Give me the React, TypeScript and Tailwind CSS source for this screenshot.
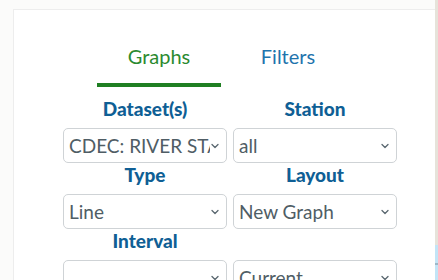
import React from "react";

const Chevron = () => (
  <svg width="8" height="6" viewBox="0 0 8 6" className="shrink-0">
    <path d="M1 1.5 L4 4.5 L7 1.5" fill="none" stroke="#5a6870" strokeWidth="1.3" strokeLinecap="round" strokeLinejoin="round" />
  </svg>
);

const Select = ({ value }: { value: string }) => (
  <div className="relative h-[35px] w-[164px] rounded-[5px] border border-[#cfd3d6] bg-white flex items-center pl-[5px] pr-[7px]">
    <div className="flex-1 overflow-hidden whitespace-nowrap text-[19px] leading-[35px] text-[#4f5d65] mr-[1px]">{value}</div>
    <Chevron />
  </div>
);

const Label = ({ text }: { text: string }) => (
  <div className="h-[24px] mb-[7px] text-center text-[19px] leading-[24px] font-black text-[#0f5f95]">{text}</div>
);

export default function App() {
  return (
    <div
      className="w-[438px] h-[280px] overflow-hidden bg-[#fbfbfa] flex"
      style={{ fontFamily: "Lato, 'Open Sans', sans-serif" }}
    >
      <div className="pl-[13px] pt-[9px] flex-1 flex">
        <div className="w-[422px] h-[300px] bg-white border-l border-t border-[#ededed]">
          <div className="flex pl-[83px] pt-[33px]">
            <div className="w-[124px] flex flex-col items-center">
              <div className="text-[20px] leading-[26px] text-[#2b8a2f]">Graphs</div>
              <div className="mt-[14px] h-[4px] w-full bg-[#1f7f22]" />
            </div>
            <div className="w-[134px] flex flex-col items-center">
              <div className="text-[20px] leading-[26px] text-[#1f74ad]">Filters</div>
            </div>
          </div>
          <div className="pl-[49px] pt-[10px] grid grid-cols-[164px_164px] gap-x-[6px]">
            <div>
              <Label text="Dataset(s)" />
              <Select value="CDEC: RIVER STAGE" />
            </div>
            <div>
              <Label text="Station" />
              <Select value="all" />
            </div>
            <div>
              <Label text="Type" />
              <Select value="Line" />
            </div>
            <div>
              <Label text="Layout" />
              <Select value="New Graph" />
            </div>
            <div>
              <Label text="Interval" />
              <Select value="" />
            </div>
            <div>
              <div className="h-[31px]" />
              <Select value="Current" />
            </div>
          </div>
        </div>
      </div>
      <div className="w-[3px] h-full flex flex-col">
        <div className="h-[245px] bg-[#e6e3da]" />
        <div className="h-[18px] bg-[#c2e4f6]" />
        <div className="h-[2px] bg-[#9cb8c8]" />
        <div className="flex-1 bg-[#c2e4f6]" />
      </div>
    </div>
  );
}
